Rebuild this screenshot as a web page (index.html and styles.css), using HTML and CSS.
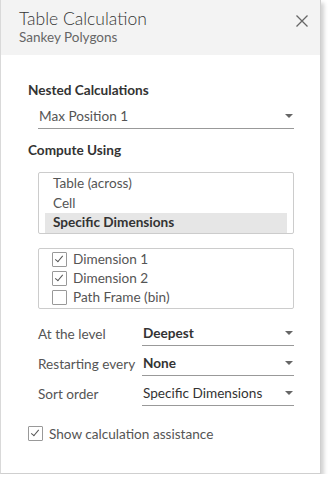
FILE: index.html
```html
<!DOCTYPE html>
<html lang="en">
<head>
    <meta charset="UTF-8">
    <meta name="viewport" content="width=device-width, initial-scale=1.0">
    <title>Table Calculation</title>
    <link rel="stylesheet" href="styles.css">
</head>
<body>
    <div class="dialog">
        <div class="header">
            <div class="titles">
                <div class="title">Table Calculation</div>
                <div class="subtitle">Sankey Polygons</div>
            </div>
            <svg class="close" width="12" height="12" viewBox="0 0 12 12">
                <path d="M0.5 0.5 L11.5 11.5 M11.5 0.5 L0.5 11.5" stroke="#666" stroke-width="1.3" fill="none"/>
            </svg>
        </div>

        <div class="content">
            <div class="section-label">Nested Calculations</div>
            <div class="dropdown nested">
                <span>Max Position 1</span>
                <span class="arrow"></span>
            </div>

            <div class="section-label compute">Compute Using</div>
            <div class="listbox">
                <div class="list-item">Table (across)</div>
                <div class="list-item">Cell</div>
                <div class="list-item selected">Specific Dimensions</div>
            </div>

            <div class="listbox checks">
                <div class="check-row"><span class="checkbox checked"></span>Dimension 1</div>
                <div class="check-row"><span class="checkbox checked"></span>Dimension 2</div>
                <div class="check-row"><span class="checkbox"></span>Path Frame (bin)</div>
            </div>

            <div class="options">
                <div class="option-row">
                    <div class="option-label">At the level</div>
                    <div class="dropdown"><span class="bold">Deepest</span><span class="arrow"></span></div>
                </div>
                <div class="option-row">
                    <div class="option-label">Restarting every</div>
                    <div class="dropdown"><span class="bold">None</span><span class="arrow"></span></div>
                </div>
                <div class="option-row">
                    <div class="option-label">Sort order</div>
                    <div class="dropdown"><span>Specific Dimensions</span><span class="arrow"></span></div>
                </div>
            </div>

            <div class="assist">
                <span class="checkbox checked"></span>Show calculation assistance
            </div>
        </div>
    </div>
</body>
</html>
```
FILE: styles.css
```css
body {
    margin: 0;
    background-color: #fff;
    font-family: Lato, "Open Sans", sans-serif;
    color: #333;
}
.dialog {
    width: 321px;
    height: 474px;
    box-sizing: border-box;
    border-left: 1px solid #d9d9d9;
    border-bottom: 1px solid #cfcfcf;
    border-right: 1px solid #cfcfcf;
    box-shadow: 3px 3px 4px rgba(0, 0, 0, 0.18);
    background-color: #fff;
}
.header {
    height: 55px;
    background-color: #f3f3f3;
    display: flex;
    justify-content: space-between;
    padding: 8px 12px 0 18px;
    box-sizing: border-box;
}
.title {
    font-size: 17.5px;
    font-weight: 300;
    line-height: 21px;
    color: #333;
}
.subtitle {
    font-size: 13.5px;
    line-height: 17px;
    color: #666;
}
.close {
    margin-top: 7px;
}
.content {
    padding: 27px 26px 0 27px;
    font-size: 13.6px;
}
.section-label {
    font-weight: bold;
    line-height: 17px;
    color: #333;
}
.section-label.compute {
    margin-top: 13px;
}
.dropdown {
    display: flex;
    justify-content: space-between;
    align-items: center;
    border-bottom: 1px solid #999;
    height: 24px;
    padding: 0 0 0 1px;
    color: #333;
    flex: 1;
}
.dropdown.nested {
    margin: 5px 0 0 10px;
    color: #555;
}
.bold {
    font-weight: bold;
}
.arrow {
    width: 0;
    height: 0;
    border-left: 4px solid transparent;
    border-right: 4px solid transparent;
    border-top: 4px solid #666;
    margin-right: 1px;
}
.listbox {
    margin: 13px 0 0 10px;
    border: 1px solid #ccc;
    border-radius: 2px;
    padding: 1px 6px 0;
}
.list-item {
    height: 19.5px;
    line-height: 19.5px;
    padding-left: 8px;
    color: #555;
}
.list-item.selected {
    background-color: #e6e6e6;
    font-weight: bold;
    color: #333;
}
.listbox.checks {
    margin-top: 14px;
    padding: 1px 6px;
}
.check-row {
    display: flex;
    align-items: center;
    height: 19px;
    padding-left: 7px;
    color: #555;
}
.checkbox {
    width: 13px;
    height: 13px;
    border: 1px solid #999;
    border-radius: 1px;
    margin-right: 6px;
    flex: none;
    position: relative;
}
.checkbox.checked::after {
    content: "";
    position: absolute;
    left: 4px;
    top: 1px;
    width: 3px;
    height: 7px;
    border-right: 1.5px solid #555;
    border-bottom: 1.5px solid #555;
    transform: rotate(40deg);
}
.options {
    margin-top: 7px;
}
.option-row {
    display: flex;
    align-items: flex-end;
    margin-left: 10px;
    height: 30px;
}
.option-label {
    width: 104px;
    height: 24px;
    line-height: 24px;
    color: #555;
}
.assist {
    display: flex;
    align-items: center;
    margin-top: 20px;
    color: #555;
}
```
